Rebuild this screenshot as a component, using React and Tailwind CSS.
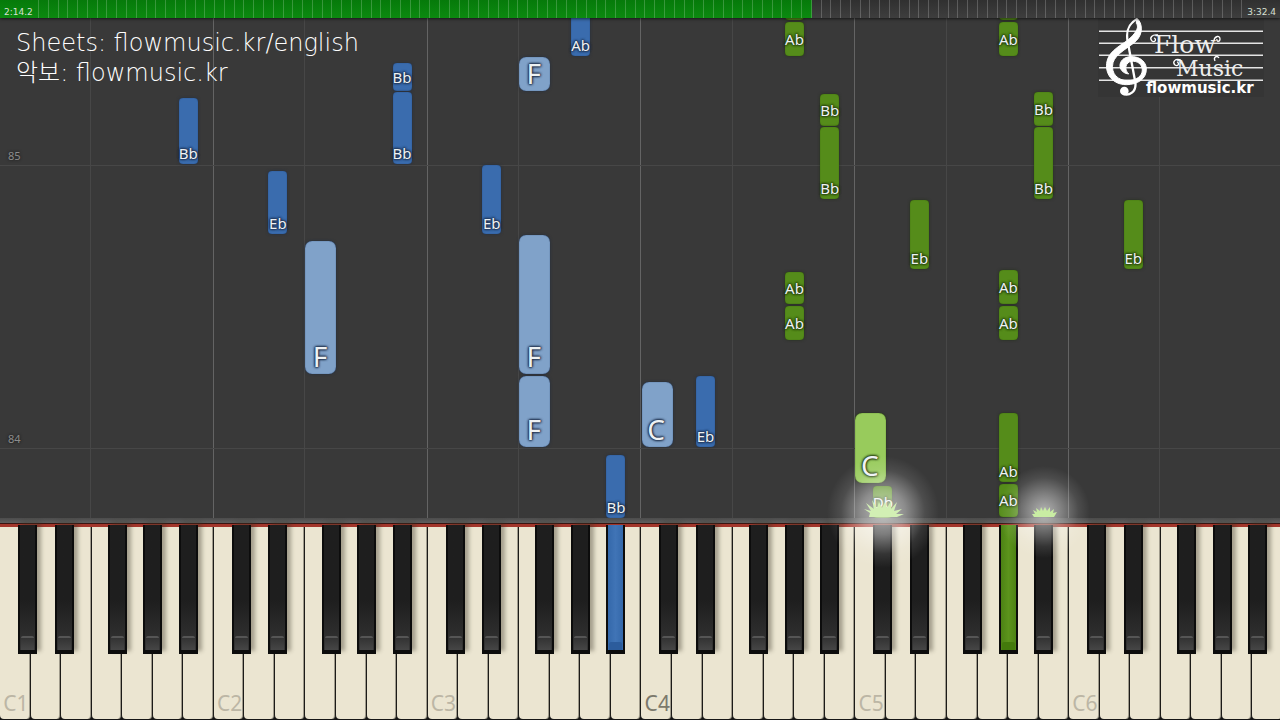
import React from 'react';
import clsx from 'clsx';

// horizontal positions inside one octave, in percent of the octave's width
const WHITE_LEFT = { C: 0, D: 14.29, E: 28.57, F: 42.86, G: 57.14, A: 71.43, B: 85.71 };
const BLACK_LEFT = { Db: 8.4, Eb: 25.5, Gb: 50.4, Ab: 67.1, Bb: 83.6 };

const WHITE_KEYS = Object.keys(WHITE_LEFT);
const BLACK_KEYS = Object.keys(BLACK_LEFT);
const OCTAVES = [1, 2, 3, 4, 5, 6];

// at = distance from the hit line, len = duration, both in pixels
const NOTES = [
  { pitch: 'Bb', octave: 1, at: 354, len: 66, hand: 'left' },
  { pitch: 'Eb', octave: 2, at: 284, len: 63, hand: 'left' },
  { pitch: 'F', octave: 2, at: 144, len: 133, hand: 'left' },
  { pitch: 'Bb', octave: 2, at: 427, len: 28, hand: 'left' },
  { pitch: 'Bb', octave: 2, at: 354, len: 72, hand: 'left' },
  { pitch: 'Eb', octave: 3, at: 284, len: 69, hand: 'left' },
  { pitch: 'F', octave: 3, at: 427, len: 34, hand: 'left' },
  { pitch: 'F', octave: 3, at: 144, len: 139, hand: 'left' },
  { pitch: 'F', octave: 3, at: 71, len: 71, hand: 'left' },
  { pitch: 'Ab', octave: 3, at: 462, len: 66, hand: 'left' },
  { pitch: 'Bb', octave: 3, at: 0, len: 63, hand: 'left' },
  { pitch: 'C', octave: 4, at: 71, len: 65, hand: 'left' },
  { pitch: 'Eb', octave: 4, at: 71, len: 71, hand: 'left' },
  { pitch: 'Ab', octave: 4, at: 498, len: 34, hand: 'right', entering: true },
  { pitch: 'Ab', octave: 4, at: 462, len: 34, hand: 'right' },
  { pitch: 'Bb', octave: 4, at: 392, len: 32, hand: 'right' },
  { pitch: 'Bb', octave: 4, at: 319, len: 72, hand: 'right' },
  { pitch: 'Ab', octave: 4, at: 214, len: 32, hand: 'right' },
  { pitch: 'Ab', octave: 4, at: 178, len: 34, hand: 'right' },
  { pitch: 'C', octave: 5, at: 35, len: 70, hand: 'right' },
  { pitch: 'Db', octave: 5, at: 0, len: 32, hand: 'right' },
  { pitch: 'Eb', octave: 5, at: 249, len: 69, hand: 'right' },
  { pitch: 'Ab', octave: 5, at: 498, len: 34, hand: 'right', entering: true },
  { pitch: 'Ab', octave: 5, at: 462, len: 34, hand: 'right' },
  { pitch: 'Bb', octave: 5, at: 392, len: 34, hand: 'right' },
  { pitch: 'Bb', octave: 5, at: 319, len: 72, hand: 'right' },
  { pitch: 'Ab', octave: 5, at: 214, len: 34, hand: 'right' },
  { pitch: 'Ab', octave: 5, at: 178, len: 34, hand: 'right' },
  { pitch: 'Ab', octave: 5, at: 36, len: 69, hand: 'right' },
  { pitch: 'Ab', octave: 5, at: 1, len: 33, hand: 'right' },
  { pitch: 'Eb', octave: 6, at: 249, len: 69, hand: 'right' },
];

const PRESSED = { Bb3: 'left', Ab5: 'right' };

const MEASURES = [
  { number: 85, at: 353 },
  { number: 84, at: 70 },
];

const leftOf = (pitch, octave) => {
  const offset = pitch in BLACK_LEFT ? BLACK_LEFT[pitch] : WHITE_LEFT[pitch];
  return `${((octave - 1) * 100 + offset) / 6}%`;
};

function ProgressBar() {
  return (
    <div className="relative z-20 h-[18px] shrink-0 bg-linear-to-b from-[#303030] to-[#3e3e3e] shadow-[0_1px_3px_rgba(0,0,0,0.6)]">
      <div
        className="h-full bg-linear-to-b from-[#067a0a] to-[#0c8a10]"
        style={{ width: '63.4%' }}
      />
      <div className="absolute inset-0 flex justify-between pl-[38px] pr-[36px]">
        {Array.from({ length: 124 }, (_, i) => (
          <span key={i} className="w-px bg-white/20" />
        ))}
      </div>
      <div className="absolute inset-0 flex items-end justify-between px-1 font-['DejaVu_Sans',sans-serif] text-[9px] leading-3 text-[#d8e0d4]">
        <span>2:14.2</span>
        <span>3:32.4</span>
      </div>
    </div>
  );
}

function Logo() {
  return (
    <svg viewBox="0 0 166 80" className="h-20 w-[166px] shrink-0" fill="white" role="img" aria-label="Flow Music">
      <rect width="166" height="79" fill="#353535" />
      <path
        d="M1 13.3H165M1 25.3H165M1 37.3H165M1 49.8H165M1 62.2H165"
        stroke="#e4e4e4"
        strokeWidth="1.5"
      />
      <g transform="translate(-3 -4) scale(.3333)">
        <path
          d="M125 12C144 28 144 60 124 80C104 100 62 118 54 146C46 180 70 200 98 200C124 200 142 186 142 168C142 150 126 140 110 142C92 144 86 166 101 180C78 178 68 156 80 140C98 118 150 126 154 162C156 196 126 212 94 212C52 212 28 178 36 142C44 106 88 90 108 70C126 52 132 38 124 28Z"
          stroke="white"
          strokeWidth="3"
        />
        <path d="M126 15C100 30 92 50 98 82L121 205C125 235 102 246 84 240" fill="none" stroke="white" strokeWidth="7" />
        <circle cx="88" cy="231" r="13" />
      </g>
      <g fontFamily="'DejaVu Serif', serif" fill="#eeeeee">
        <text x="56" y="35" fontSize="25">Flow</text>
        <text x="78" y="58" fontSize="22">Music</text>
      </g>
      <g fill="none" stroke="white" strokeWidth="1.3">
        <path d="M60 17C54 16 51 20 54 23C57 25 59 21 56 20" />
        <path d="M116 22C117 18 122 17 122 21C122 24 118 24 119 21" />
        <path d="M83 42C77 40 74 44 77 47C80 49 82 45 79 44" />
        <path d="M117 43C115 39 119 37 121 40" />
      </g>
      <text x="48" y="75" fontSize="15" fontWeight="bold" fontFamily="'DejaVu Sans', sans-serif">
        flowmusic.kr
      </text>
    </svg>
  );
}

function Note({ pitch, octave, at, len, hand, entering }) {
  const black = pitch in BLACK_LEFT;
  const short = len < 36;

  return (
    <div
      className={clsx(
        'absolute flex justify-center text-[#eef2f4]',
        black
          ? 'w-[19px] rounded-[4px] pb-px text-[15px] leading-5'
          : 'w-[31px] rounded-[7px] pr-0.5 pb-0.5 text-[28px] leading-8',
        short ? 'items-center' : 'items-end',
        hand === 'left' && (black ? 'bg-[#3a6cae]' : 'bg-[#80a2c9]'),
        hand === 'right' && (black ? 'bg-[#558c1a]' : 'bg-[#98cb5c]'),
        hand === 'left'
          ? 'shadow-[inset_0_0_1px_#1d3a68,0_0_3px_#222e40] [text-shadow:0_0_2px_#1c2c48,0_0_2px_#1c2c48,0_0_3px_#1c2c48,0_0_3px_#1c2c48]'
          : 'shadow-[inset_0_0_1px_#2c5208,0_0_3px_#24301a] [text-shadow:0_0_2px_#223a10,0_0_2px_#223a10,0_0_3px_#223a10,0_0_3px_#223a10]'
      )}
      style={{ left: leftOf(pitch, octave), bottom: at, height: len }}
    >
      {!entering && pitch}
    </div>
  );
}

function Roll() {
  return (
    <div className="relative flex-1 overflow-hidden bg-[#393939]">
      <div className="absolute inset-y-0 left-0 flex w-[calc(100%+3px)]">
        {OCTAVES.map((octave) => (
          <div key={octave} className="flex flex-1 border-r border-[#646464]">
            <div className="w-3/7 border-r border-[#474747]" />
          </div>
        ))}
      </div>

      {MEASURES.map((m) => (
        <div
          key={m.number}
          className="absolute inset-x-0 border-b border-[#474747] pb-px pl-2 text-[11px] leading-4 text-[#8c8c8c] [text-shadow:0_0_3px_#111]"
          style={{ bottom: m.at - 1 }}
        >
          {m.number}
        </div>
      ))}

      <div className="absolute inset-y-0 left-0 w-[calc(100%+3px)]">
        {NOTES.map((note) => (
          <Note key={`${note.pitch}${note.octave}-${note.at}`} {...note} />
        ))}
      </div>

      <header className="relative z-10 flex items-start justify-between pr-4 pl-4">
        <div className="pt-[10px] font-['DejaVu_Sans','Noto_Sans_CJK_KR',sans-serif] text-[24px] leading-[30px] font-extralight text-white">
          <p>Sheets: flowmusic.kr/english</p>
          <p>악보: flowmusic.kr</p>
        </div>
        <Logo />
      </header>
    </div>
  );
}

function BlackKey({ pitch, octave }) {
  const hand = PRESSED[pitch + octave];

  return (
    <button
      type="button"
      aria-label={pitch + octave}
      className={clsx(
        'absolute -top-0.5 flex h-[129px] w-[19px] flex-col justify-end border-x-2 border-b-4 border-[#0c0c0c]',
        !hand && 'bg-linear-to-b from-[#1e1e1e] from-60% to-[#353535] shadow-[4px_-3px_4px_rgba(60,55,40,0.4)]',
        hand === 'left' && 'bg-linear-to-r from-[#3468aa] via-[#4074b6] to-[#3468aa]',
        hand === 'right' && 'bg-linear-to-r from-[#4c8214] via-[#5c941c] to-[#4c8214]'
      )}
      style={{ left: `${BLACK_LEFT[pitch]}%` }}
    >
      <span
        className={clsx(
          'mx-px block rounded-t-xs',
          !hand && 'h-[14px] border-t-2 border-[#555] bg-linear-to-b from-[#333] to-[#464646]',
          hand === 'left' && 'h-2 bg-[#2c5c9c]',
          hand === 'right' && 'h-2 bg-[#437a0c]'
        )}
      />
    </button>
  );
}

function Keyboard() {
  return (
    <div className="flex h-[193px] w-[calc(100%+3px)] shrink-0 bg-[#161616]">
      {OCTAVES.map((octave) => (
        <div key={octave} className="relative flex flex-1">
          {WHITE_KEYS.map((pitch) => (
            <button
              key={pitch}
              type="button"
              aria-label={pitch + octave}
              className={clsx(
                'mb-px flex flex-1 items-end justify-center rounded-b-[4px] border-r border-[#1c1b18] bg-[#ebe5d1] pb-0.5 pl-0.5 text-[21px] leading-7 shadow-[inset_-1px_0_0_#a09b8c]',
                octave === 4 ? 'text-[#7c796c]' : 'text-[#bcb6a5]'
              )}
            >
              {pitch === 'C' && `C${octave}`}
            </button>
          ))}
          {BLACK_KEYS.map((pitch) => (
            <BlackKey key={pitch} pitch={pitch} octave={octave} />
          ))}
        </div>
      ))}
    </div>
  );
}

// burst of light where a note has just hit the line
function Spark({ pitch, octave, big }) {
  return (
    <div
      className="pointer-events-none absolute bottom-[142px] z-10 flex h-[132px] w-[19px] justify-center"
      style={{ left: leftOf(pitch, octave) }}
    >
      <svg viewBox="0 0 132 132" className="w-[132px] shrink-0">
        <defs>
          <radialGradient id={`glow-${pitch}`}>
            <stop offset="0" stopColor="#fff" stopOpacity={big ? 0.66 : 0.62} />
            <stop offset="0.4" stopColor="#fff" stopOpacity={big ? 0.42 : 0.35} />
            <stop offset="0.75" stopColor="#fff" stopOpacity="0.1" />
            <stop offset="1" stopColor="#fff" stopOpacity="0" />
          </radialGradient>
        </defs>
        <circle cx="66" cy="66" r={big ? 56 : 46} fill={`url(#glow-${pitch})`} />
        {big ? (
          <path
            fill="#d2efb4"
            d="M52 71L53 67L47 63L54 65L49 57L57 63L55 54L60 62L62 56L65 62L68 56L70 62L74 55L74 63L80 56L77 65L85 63L79 68L87 68L80 71Z"
          />
        ) : (
          <path
            fill="#c9eda3"
            d="M56 71L54 68L57 68L55 64L59 66L58 62L62 65L63 61L65 65L67 61L69 65L72 61L72 66L76 63L75 67L79 66L76 71Z"
          />
        )}
      </svg>
    </div>
  );
}

function App() {
  return (
    <div className="flex h-screen flex-col overflow-hidden bg-[#393939] font-['Noto_Sans',sans-serif]">
      <ProgressBar />
      <main className="relative flex flex-1 flex-col overflow-hidden">
        <Roll />
        <div className="h-[5px] shrink-0 bg-linear-to-b from-[#4c4c4c] to-[#5e5e5e]" />
        <div className="h-1 shrink-0 border-t border-[#3a1512] bg-[#a3362b]" />
        <Keyboard />
        <div className="pointer-events-none absolute inset-y-0 left-0 w-[calc(100%+3px)]">
          <Spark pitch="Db" octave={5} big />
          <Spark pitch="Bb" octave={5} />
        </div>
      </main>
    </div>
  );
}

export default App;
